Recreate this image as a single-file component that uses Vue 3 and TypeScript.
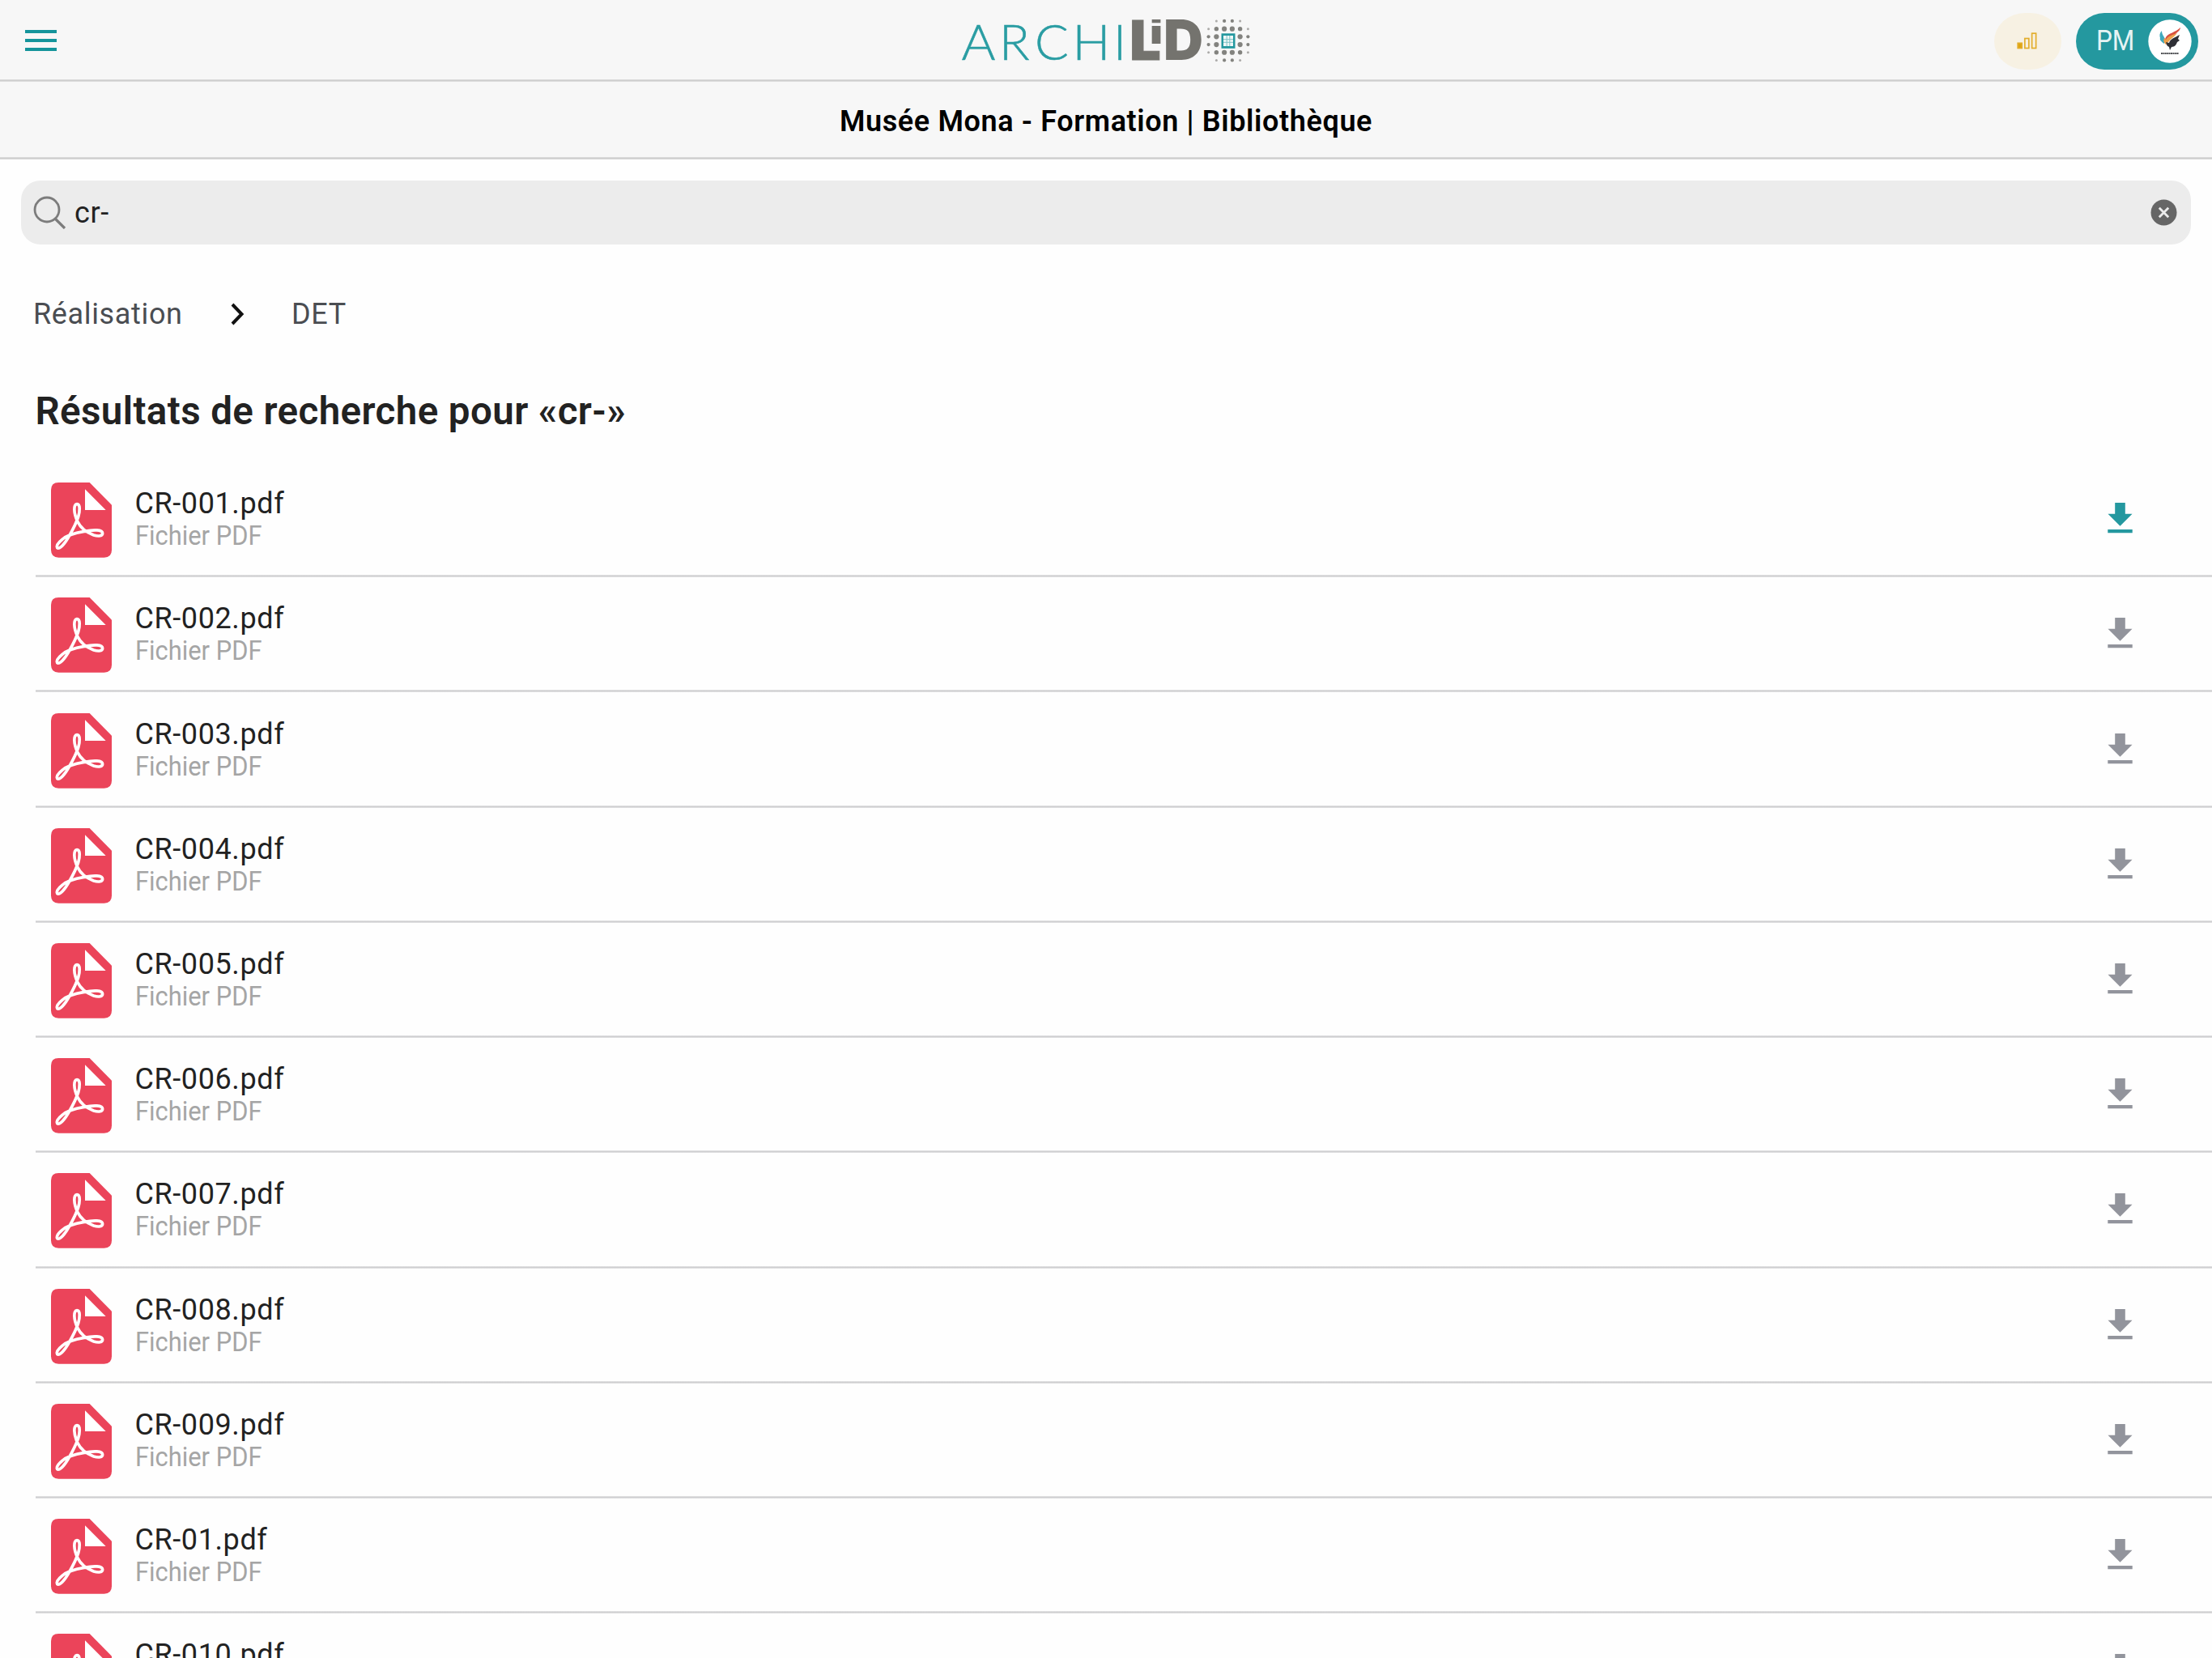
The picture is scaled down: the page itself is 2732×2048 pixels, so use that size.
<script setup lang="ts">
interface FileEntry {
  name: string
  kind: string
  active: boolean
}

const names: string[] = [
  'CR-001.pdf', 'CR-002.pdf', 'CR-003.pdf', 'CR-004.pdf', 'CR-005.pdf', 'CR-006.pdf',
  'CR-007.pdf', 'CR-008.pdf', 'CR-009.pdf', 'CR-01.pdf', 'CR-010.pdf',
]
const files: FileEntry[] = names.map((name, i) => ({ name, kind: 'Fichier PDF', active: i === 0 }))

interface Dot {
  x: number
  y: number
  r: number
  o: number
}

// Halftone ring of the logo: a 6x6 grid, corners and centre left out, dots fading outwards
const dots: Dot[] = []
for (let row = 0; row < 6; row++) {
  for (let col = 0; col < 6; col++) {
    const dx = Math.abs(col - 2.5)
    const dy = Math.abs(row - 2.5)
    if ((dx > 2 && dy > 2) || (dx < 1 && dy < 1)) continue
    const sum = dx + dy
    const r = sum < 2.5 ? 3.1 : sum < 3.5 ? (dx === dy ? 2.7 : 2.1) : 1.5
    dots.push({ x: 347 + (col - 2.5) * 9.75, y: 50.2 + (row - 2.5) * 9.7, r, o: sum < 3.5 ? 0.85 : 0.55 })
  }
}
</script>

<template>
  <div class="page">
    <header class="topbar">
      <svg class="menu" width="39" height="26" viewBox="0 0 39 26">
        <path d="M0 2h39M0 13h39M0 24h39" stroke="#15949b" stroke-width="3.8" />
      </svg>
      <svg class="logo" width="400" height="98" viewBox="0 0 400 98">
        <g class="thin">
          <text x="17.5" y="73.5" textLength="42" lengthAdjust="spacingAndGlyphs">A</text>
          <text x="64" y="73.5">R</text>
          <text x="108" y="73.5">C</text>
          <text x="154.500" y="73.5">H</text>
          <text x="205" y="73.5">I</text>
        </g>
        <g class="heavy">
          <text x="225.500" y="73.500" font-size="67.500" stroke="#74736e" stroke-width="1">L</text>
          <text class="small-i" transform="translate(247.200 54) scale(1.900 1)" font-size="41">i</text>
          <text x="267" y="74" font-size="68.800" textLength="49" lengthAdjust="spacingAndGlyphs">D</text>
        </g>
        <circle v-for="(d, i) in dots" :key="i" :cx="d.x" :cy="d.y" :r="d.r" :opacity="d.o" fill="#6f6e6a" />
        <rect x="338.500" y="41.300" width="17" height="18.500" fill="#24989f" />
        <rect x="341" y="44" width="12" height="13" fill="#eef7f7" />
        <path d="M345.200 44v13M348.800 44v13M341 48.700h12M341 52.300h12" stroke="#24989f" stroke-width="1" opacity=".55" />
      </svg>
      <div class="actions">
        <div class="signal">
          <svg width="26" height="22" viewBox="0 0 26 22">
            <g fill="none" stroke="#e2ad2c" stroke-width="1.700">
              <rect x="1.200" y="13.300" width="5" height="6.200" fill="#dfa50f" />
              <rect x="9.800" y="7.500" width="5" height="12" />
              <rect x="18.600" y="1.200" width="5" height="18.300" />
            </g>
          </svg>
        </div>
        <div class="account">
          <span class="initials">PM</span>
          <svg class="avatar" width="54" height="54" viewBox="0 0 54 54">
            <circle cx="27" cy="27" r="26.700" fill="#fff" />
            <path d="M17 14c0 5 3 7 4 10l-1 6c-4-3-6-5-5-7-1-3-1-6 2-9z" fill="#3fa9bd" />
            <path d="M40 10c-6 6-15 7-18 12-2 4-2 7 0 9 2-8 8-10 13-14 2-2 5-4 5-7z" fill="#d9503f" />
            <path d="M36 17c-5 2-11 3-14 8l-2-2c-2 5 1 7 3 8 3-6 8-8 13-14z" fill="#eda04a" />
            <path d="M39 19c-5 3-12 5-13 10l-4-1c1 4 2 5 4 6l1 4 2-4c4 0 6-3 7-6l3-2-2-2z" fill="#2e2f35" />
            <path d="M16 42h22" stroke="#55565a" stroke-width="2" stroke-dasharray="2 .4" />
          </svg>
        </div>
      </div>
    </header>
    <div class="rule"></div>
    <div class="titlebar"><h1>Musée Mona - Formation | Bibliothèque</h1></div>
    <div class="rule"></div>

    <div class="search">
      <svg class="magnifier" width="42" height="42" viewBox="0 0 42 42" fill="none" stroke="#7c7c7c" stroke-width="2.800">
        <circle cx="18" cy="18" r="15" />
        <path d="M28.500 29.500L40 41" stroke-width="3.200" />
      </svg>
      <span class="query">cr-</span>
      <svg width="33" height="33" viewBox="0 0 33 33">
        <circle cx="16.500" cy="16.500" r="16" fill="#666" />
        <path d="M10.800 10.800l11.400 11.400M22.200 10.800L10.800 22.200" stroke="#ececec" stroke-width="2.800" />
      </svg>
    </div>

    <nav class="crumbs">
      <span class="c1">Réalisation</span>
      <svg width="18" height="28" viewBox="0 0 18 28" fill="none" stroke="#111" stroke-width="4">
        <path d="M2 2l11.500 12L2 26" />
      </svg>
      <span class="c2">DET</span>
    </nav>

    <h2>Résultats de recherche pour «cr-»</h2>

    <ul class="files">
      <li v-for="file in files" :key="file.name">
        <div class="row">
          <svg class="pdf" width="75" height="93" viewBox="67 78 225 279">
            <path d="M95 78H210L292 161V328Q292 356 264 356H95Q67 356 67 328V106Q67 78 95 78Z" fill="#eb445a" />
            <path d="M193 103V180H270Z" fill="#fff" />
            <path
              d="M163 158C150 158 150 190 165 222C176 245 195 262 225 273C245 279 258 275 258 266C258 252 225 252 190 259C150 266 125 274 110 288C95 300 86 312 90 320C98 328 118 306 135 275C152 245 160 230 168 205C174 185 176 158 163 158Z"
              fill="none" stroke="#fff" stroke-width="11" stroke-linejoin="round"
            />
          </svg>
          <div class="label">
            <span class="name">{{ file.name }}</span>
            <span class="kind">{{ file.kind }}</span>
          </div>
          <svg class="download" :class="{ active: file.active }" width="31" height="38" viewBox="0 0 31 38">
            <path d="M9.200 0h12.600v13.800h8.700L15.500 28.800.500 13.800h8.700zM.300 33h30.400v4.300H.300z" />
          </svg>
        </div>
        <div class="line"></div>
      </li>
    </ul>
  </div>
</template>

<style>
body {
  margin: 0;
  background: #fff;
}
</style>

<style scoped>
.page {
  width: 2732px;
  height: 2048px;
  overflow: hidden;
  background: #fefefe;
  font-family: Roboto, "Liberation Sans", sans-serif;
  color: #222;
  display: flex;
  flex-direction: column;
}
.page > * {
  flex-shrink: 0;
}
.topbar {
  height: 98px;
  background: #f7f7f7;
  display: grid;
  grid-template-columns: 1170px 400px 1fr;
  align-items: center;
}
.menu {
  margin: 2px 0 0 31px;
}
.logo {
  display: block;
}
.thin {
  font-family: Lato, sans-serif;
  font-weight: 300;
  font-size: 62px;
  fill: #2a9da3;
  stroke: #2a9da3;
  stroke-width: 0.5px;
}
.heavy {
  font-family: Inter, sans-serif;
  font-weight: 900;
  fill: #74736e;
}
.small-i {
  font-family: "Liberation Sans", sans-serif;
  font-weight: 700;
}
.actions {
  display: flex;
  justify-content: flex-end;
  padding: 3px 17.5px 0 0;
  gap: 17.5px;
}
.signal {
  width: 83px;
  height: 70px;
  border-radius: 38px / 35px;
  background: #f7f1e3;
  display: flex;
  align-items: center;
  justify-content: center;
  box-sizing: border-box;
  padding-right: 2px;
}
.account {
  width: 151px;
  height: 70px;
  border-radius: 35px;
  background: #24989f;
  display: flex;
  align-items: center;
  justify-content: space-between;
  box-sizing: border-box;
  padding: 0 8px 0 25px;
}
.initials {
  font-size: 35px;
  color: #e6f4f4;
  transform: scaleX(0.9);
  transform-origin: left;
}
.rule {
  height: 3px;
  background: linear-gradient(#e2e2e2, #cdcdcd, #e2e2e2);
}
.titlebar {
  height: 93px;
  background: #f7f7f7;
  display: flex;
  align-items: center;
  justify-content: center;
}
h1 {
  margin: 4px 0 0;
  font-size: 36px;
  font-weight: 600;
  letter-spacing: 0.62px;
  color: #000;
}
.search {
  margin: 26px 26px 0;
  height: 79px;
  border-radius: 24px;
  background: #ececec;
  display: flex;
  align-items: center;
  box-sizing: border-box;
  padding: 0 17px 0 14px;
}
.magnifier {
  margin-top: -1px;
}
.query {
  flex: 1;
  padding-left: 10px;
  font-size: 36px;
  letter-spacing: 0.6px;
}
.crumbs {
  height: 60px;
  margin: 56px 0 0 41px;
  display: flex;
  align-items: center;
  font-size: 36px;
  letter-spacing: 0.65px;
  color: #4a4d52;
}
.c1 {
  width: 244px;
}
.c2 {
  margin-left: 57px;
}
h2 {
  margin: 60px 0 0 43.5px;
  height: 60px;
  line-height: 60px;
  font-size: 47.5px;
  font-weight: 600;
  letter-spacing: 0.4px;
  color: #222;
}
.files {
  list-style: none;
  padding: 0;
  margin: 33px 0 0 44px;
}
li {
  height: 142.22px;
}
.row {
  height: 139.22px;
  display: flex;
  align-items: center;
}
.pdf {
  margin: 4px 0 0 18.5px;
}
.label {
  flex: 1;
  display: flex;
  flex-direction: column;
  margin: 1px 0 0 29px;
}
.name {
  font-size: 36px;
  line-height: 42px;
  letter-spacing: 0.6px;
  color: #222;
}
.kind {
  font-size: 33px;
  line-height: 38px;
  transform: scaleX(0.935);
  transform-origin: left;
  color: #a5a5a5;
}
.download {
  margin: -1px 98px 0 0;
  fill: #92949c;
}
.download.active {
  fill: #24989f;
}
.line {
  height: 3px;
  background: linear-gradient(#e6e6e7, #cfcfd1, #e6e6e7);
}
</style>
